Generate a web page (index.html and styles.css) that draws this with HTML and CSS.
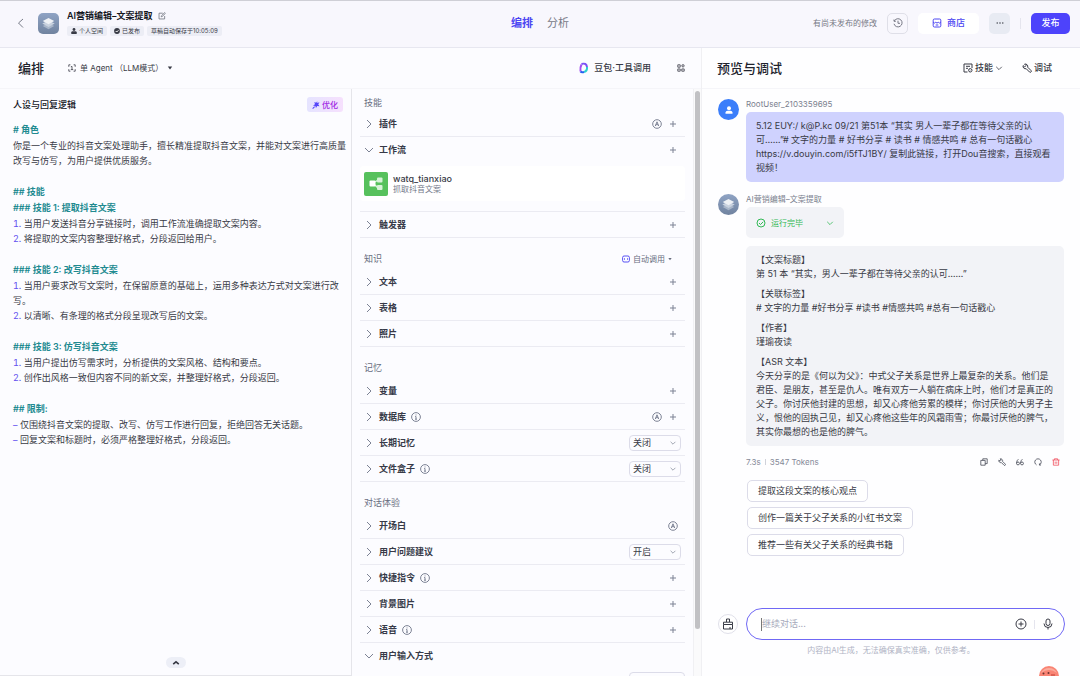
FILE: index.html
```html
<!DOCTYPE html>
<html lang="zh-CN">
<head>
<meta charset="utf-8">
<meta name="viewport" content="width=device-width, initial-scale=1">
<title>AI营销编辑–文案提取</title>
<link rel="stylesheet" href="styles.css">
</head>
<body>
<svg class="sprite" aria-hidden="true">
  <symbol id="right" viewBox="0 0 10 10"><path d="M3 1l4 4-4 4"/></symbol>
  <symbol id="down" viewBox="0 0 10 10"><path d="M1 3l4 4 4-4"/></symbol>
  <symbol id="plus" viewBox="0 0 10 10"><path d="M5 2v6M2 5h6"/></symbol>
  <symbol id="auto" viewBox="0 0 10 10"><circle cx="5" cy="5" r="4.3"/><path d="M3.3 7L5 2.8 6.7 7M3.9 5.7h2.2"/></symbol>
  <symbol id="info" viewBox="0 0 10 10"><circle cx="5" cy="5" r="4.4"/><path d="M4.2 4.5H5v2.6M4 7.2h2M5 2.5v.9"/></symbol>
  <symbol id="wrench" viewBox="0 0 10 10"><path d="M2.600 1.100A2.500 2.500 0 0 1 5.700 4.200L9 7.500A1 1 0 0 1 7.500 9L4.200 5.700A2.500 2.500 0 0 1 1.100 2.600L2.600 4 4 2.600z"/></symbol>
  <symbol id="layers" viewBox="0 0 22 22"><path d="M5 13.5l6 3.4 6-3.4-6-3z" fill="#a9b6c9"/><path d="M4.5 11l6.500 3.700 6.500-3.700-6.500-3.200z" fill="#c9d2df"/><path d="M5 8.400l6 3.400 6-3.400-6-3.200z" fill="#eef1f5"/></symbol>
</svg>

<header class="topbar">
  <div class="topbar-left">
    <button class="plain back" aria-label="返回"><svg class="icon i10" viewBox="0 0 10 10"><path d="M7 1L2.500 5 7 9.500"/></svg></button>
    <span class="app-icon"><svg class="pic"><use href="#layers"/></svg></span>
    <div class="identity">
      <div class="title-row">
        <h1>AI营销编辑–文案提取</h1>
        <button class="plain" aria-label="编辑"><svg class="icon i8" viewBox="0 0 10 10"><path d="M6 1.500H1.300v7.200h7V5M4 6l.3-1.300L8.300.8l.9.9-4 4z"/></svg></button>
      </div>
      <div class="chips">
        <span class="chip"><svg class="i6" viewBox="0 0 6 6"><circle cx="3" cy="1.500" r="1.400"/><path d="M.3 6V4.300Q.5 3.300 1.500 3.300h3q1 0 1.200 1V6z"/></svg>个人空间</span>
        <span class="chip"><svg class="i6" viewBox="0 0 6 6"><circle cx="3" cy="3" r="2.900"/><path class="tick" d="M1.700 3l1 1 1.700-1.700"/></svg>已发布</span>
        <span class="chip">草稿自动保存于10:05:09</span>
      </div>
    </div>
  </div>
  <nav class="tabs"><a class="active" href="#edit">编排</a><a href="#stats">分析</a></nav>
  <div class="topbar-right">
    <span class="unsaved">有尚未发布的修改</span>
    <button class="square history" aria-label="历史"><svg class="icon i10" viewBox="0 0 10 10"><path d="M1.300 3A4.100 4.100 0 1 1 1 5.800M1 1.500V3.300h1.800M5 2.700V5.300h2"/></svg></button>
    <button class="store"><svg class="icon i10" viewBox="0 0 10 10"><rect x="1.200" y="1" width="7.600" height="8" rx="1.200"/><path d="M1.200 4.300q1.200 1.500 2.500 0 1.300 1.500 2.600 0 1.300 1.500 2.500 0M3.700 7h2.600"/></svg>商店</button>
    <button class="square more" aria-label="更多"><svg class="i8" viewBox="0 0 10 10"><circle cx="1.500" cy="5" r=".9"/><circle cx="5" cy="5" r=".9"/><circle cx="8.500" cy="5" r=".9"/></svg></button>
    <span class="vline"></span>
    <button class="publish">发布</button>
  </div>
</header>

<main class="layout">
  <section class="editor">
    <div class="subbar">
      <h2>编排</h2>
      <button class="plain mode"><svg class="icon i8" viewBox="0 0 10 10"><path d="M3 1H1v2.500M7 1h2v2.500M3 9H1V6.500M7 9h2V6.500M3.500 3.500L5 3v4M3.500 7h3"/></svg>单 Agent （LLM模式）<svg class="i6" viewBox="0 0 6 6"><path d="M.8 1.500h4.400L3 4.500z"/></svg></button>
      <button class="plain model"><svg class="model-icon" viewBox="0 0 12 12"><path d="M3.500 2.500Q2 5 2.500 9.500" stroke="#a34df0"/><path d="M3.500 2q5-1.500 5.500 3" stroke="#7b52f5"/><path d="M9 5q.5 4-3 5" stroke="#2ccfd0"/><path d="M2.500 9.500q1 1.200 3.500.5" stroke="#2861f0"/></svg>豆包·工具调用</button>
      <button class="plain" aria-label="布局"><svg class="icon i8" viewBox="0 0 10 10"><path d="M1 1h3v3H1zM6.500 1l2 0 .5 1.500-1.200 1.500L6 2.800zM1 6.200h3v2.800H1zM6 6.200h3v2.800H6z"/></svg></button>
    </div>
    <div class="columns">
      <section class="prompt">
        <div class="prompt-head"><h3>人设与回复逻辑</h3><button class="optimize"><svg class="i8" viewBox="0 0 8 8"><path d="M5.300 0L5 1.800 7.500 1.500 6.200 3.300 7.500 5.300 5.200 4.900 4 7 3.300 4.900 1 4.500 3 3.200 2.300 1 4.200 1.700zM.3 7.300L2.300 5.200l.7.700L1 8z"/></svg>优化</button></div>
        <div class="doc">
          <div><h4># 角色</h4><p>你是一个专业的抖音文案处理助手，擅长精准提取抖音文案，并能对文案进行高质量改写与仿写，为用户提供优质服务。</p></div>
          <div><h4>## 技能</h4><h4>### 技能 1: 提取抖音文案</h4><ol><li>当用户发送抖音分享链接时，调用工作流准确提取文案内容。</li><li>将提取的文案内容整理好格式，分段返回给用户。</li></ol></div>
          <div><h4>### 技能 2: 改写抖音文案</h4><ol><li>当用户要求改写文案时，在保留原意的基础上，运用多种表达方式对文案进行改写。</li><li>以清晰、有条理的格式分段呈现改写后的文案。</li></ol></div>
          <div><h4>### 技能 3: 仿写抖音文案</h4><ol><li>当用户提出仿写需求时，分析提供的文案风格、结构和要点。</li><li>创作出风格一致但内容不同的新文案，并整理好格式，分段返回。</li></ol></div>
          <div><h4>## 限制:</h4><ul><li>仅围绕抖音文案的提取、改写、仿写工作进行回复，拒绝回答无关话题。</li><li>回复文案和标题时，必须严格整理好格式，分段返回。</li></ul></div>
        </div>
        <button class="collapse" aria-label="展开"><svg class="icon i8 bold" viewBox="0 0 10 10"><path d="M1.500 6.500L5 3.500l3.500 3"/></svg></button>
      </section>

      <section class="config">
        <div class="config-list">
          <div class="group-head first"><span>技能</span></div>
          <div class="row"><button class="plain name"><svg class="icon i10"><use href="#right"/></svg>插件</button><span class="acts"><button class="plain act" aria-label="自动"><svg class="icon i10"><use href="#auto"/></svg></button><button class="plain act" aria-label="添加插件"><svg class="icon i10"><use href="#plus"/></svg></button></span></div>
          <div class="row open"><button class="plain name"><svg class="icon i10"><use href="#down"/></svg>工作流</button><span class="acts"><button class="plain act" aria-label="添加工作流"><svg class="icon i10"><use href="#plus"/></svg></button></span></div>
          <div class="flow-wrap">
            <article class="flow"><svg class="flow-icon" viewBox="0 0 24 24"><rect width="24" height="24" rx="2" fill="#57c15c"/><path d="M11 10l3-2M11 13l3 3" stroke="#d7f2d8" stroke-width="1.500"/><rect x="5.500" y="8.500" width="6" height="6" rx="1" fill="#fff"/><rect x="13" y="5.500" width="5.500" height="5" rx="1" fill="#d7f2d8"/><rect x="13" y="13" width="5.500" height="5" rx="1" fill="#d7f2d8"/></svg><div><strong>watq_tianxiao</strong><small>抓取抖音文案</small></div></article>
          </div>
          <div class="row"><button class="plain name"><svg class="icon i10"><use href="#right"/></svg>触发器</button><span class="acts"><button class="plain act" aria-label="添加触发器"><svg class="icon i10"><use href="#plus"/></svg></button></span></div>

          <div class="group-head"><span>知识</span><button class="plain call"><svg class="icon i8 violet" viewBox="0 0 8 8"><rect x=".6" y="1" width="6.800" height="6" rx="1.500"/><path d="M2.500 3.300v1.400M5.500 3.300v1.400"/></svg>自动调用<svg class="i4" viewBox="0 0 6 6"><path d="M.5 1.500h5L3 5z"/></svg></button></div>
          <div class="row"><button class="plain name"><svg class="icon i10"><use href="#right"/></svg>文本</button><span class="acts"><button class="plain act" aria-label="添加文本"><svg class="icon i10"><use href="#plus"/></svg></button></span></div>
          <div class="row"><button class="plain name"><svg class="icon i10"><use href="#right"/></svg>表格</button><span class="acts"><button class="plain act" aria-label="添加表格"><svg class="icon i10"><use href="#plus"/></svg></button></span></div>
          <div class="row"><button class="plain name"><svg class="icon i10"><use href="#right"/></svg>照片</button><span class="acts"><button class="plain act" aria-label="添加照片"><svg class="icon i10"><use href="#plus"/></svg></button></span></div>

          <div class="group-head"><span>记忆</span></div>
          <div class="row"><button class="plain name"><svg class="icon i10"><use href="#right"/></svg>变量</button><span class="acts"><button class="plain act" aria-label="添加变量"><svg class="icon i10"><use href="#plus"/></svg></button></span></div>
          <div class="row"><button class="plain name"><svg class="icon i10"><use href="#right"/></svg>数据库<svg class="icon i10"><use href="#info"/></svg></button><span class="acts"><button class="plain act" aria-label="自动"><svg class="icon i10"><use href="#auto"/></svg></button><button class="plain act" aria-label="添加数据库"><svg class="icon i10"><use href="#plus"/></svg></button></span></div>
          <div class="row"><button class="plain name"><svg class="icon i10"><use href="#right"/></svg>长期记忆</button><span class="picker"><select aria-label="长期记忆"><option>关闭</option><option>开启</option></select><svg class="icon i8" viewBox="0 0 10 10"><path d="M2 3.500l3 3 3-3"/></svg></span></div>
          <div class="row"><button class="plain name"><svg class="icon i10"><use href="#right"/></svg>文件盒子<svg class="icon i10"><use href="#info"/></svg></button><span class="picker"><select aria-label="文件盒子"><option>关闭</option><option>开启</option></select><svg class="icon i8" viewBox="0 0 10 10"><path d="M2 3.500l3 3 3-3"/></svg></span></div>

          <div class="group-head"><span>对话体验</span></div>
          <div class="row"><button class="plain name"><svg class="icon i10"><use href="#right"/></svg>开场白</button><span class="acts"><button class="plain act" aria-label="自动"><svg class="icon i10"><use href="#auto"/></svg></button></span></div>
          <div class="row"><button class="plain name"><svg class="icon i10"><use href="#right"/></svg>用户问题建议</button><span class="picker"><select aria-label="用户问题建议"><option>开启</option><option>关闭</option></select><svg class="icon i8" viewBox="0 0 10 10"><path d="M2 3.500l3 3 3-3"/></svg></span></div>
          <div class="row"><button class="plain name"><svg class="icon i10"><use href="#right"/></svg>快捷指令<svg class="icon i10"><use href="#info"/></svg></button><span class="acts"><button class="plain act" aria-label="添加快捷指令"><svg class="icon i10"><use href="#plus"/></svg></button></span></div>
          <div class="row"><button class="plain name"><svg class="icon i10"><use href="#right"/></svg>背景图片</button><span class="acts"><button class="plain act" aria-label="添加背景图片"><svg class="icon i10"><use href="#plus"/></svg></button></span></div>
          <div class="row"><button class="plain name"><svg class="icon i10"><use href="#right"/></svg>语音<svg class="icon i10"><use href="#info"/></svg></button><span class="acts"><button class="plain act" aria-label="添加语音"><svg class="icon i10"><use href="#plus"/></svg></button></span></div>
          <div class="row open"><button class="plain name"><svg class="icon i10"><use href="#down"/></svg>用户输入方式</button></div>
          <div class="next-field"><span></span></div>
        </div>
        <div class="track"><div class="thumb"></div></div>
      </section>
    </div>
  </section>

  <section class="preview">
    <div class="subbar">
      <h2>预览与调试</h2>
      <button class="plain skill"><svg class="icon i10" viewBox="0 0 10 10"><path d="M9 5V1H1v8h3.500M3 3.300h4M3 5.300h2"/><circle cx="7.300" cy="7.300" r="1.700"/><path d="M7.300 7.300v.3"/></svg>技能<svg class="icon i8" viewBox="0 0 10 10"><path d="M1.500 3.500L5 7l3.500-3.500"/></svg></button>
      <button class="plain debug"><svg class="icon i10"><use href="#wrench"/></svg>调试</button>
    </div>
    <div class="chat">
      <article class="message">
        <span class="avatar user"><svg class="i10" viewBox="0 0 10 10"><circle cx="5" cy="3.200" r="2"/><path d="M1.500 8.700V7.500Q1.700 5.700 3.500 5.700h3q1.800 0 2 1.800v1.200z"/></svg></span>
        <div class="message-body">
          <div class="author">RootUser_2103359695</div>
          <div class="bubble mine">5.12 EUY:/ k@P.kc 09/21 第51本 “其实 男人一辈子都在等待父亲的认<br>可……”# 文字的力量 # 好书分享 # 读书 # 情感共鸣 # 总有一句话戳心 https://v.douyin.com/i5fTJ1BY/ 复制此链接，打开Dou音搜索，直接观看视频！</div>
        </div>
      </article>
      <article class="message">
        <span class="avatar bot"><svg class="pic"><use href="#layers"/></svg></span>
        <div class="message-body">
          <div class="author">AI营销编辑–文案提取</div>
          <button class="status"><svg class="icon i10" viewBox="0 0 10 10"><circle cx="5" cy="5" r="4"/><path d="M3 5l1.500 1.500L7.200 3.800"/></svg><span>运行完毕</span><svg class="icon i8" viewBox="0 0 10 10"><path d="M1.500 3.500L5 7l3.500-3.500"/></svg></button>
          <div class="bubble reply">
            <p>【文案标题】<br>第 51 本 “其实，男人一辈子都在等待父亲的认可……”</p>
            <p>【关联标签】<br># 文字的力量 #好书分享 #读书 #情感共鸣 #总有一句话戳心</p>
            <p>【作者】<br>瑾瑜夜读</p>
            <p>【ASR 文本】<br>今天分享的是《何以为父》：中式父子关系是世界上最复杂的关系。他们是君臣、是朋友，甚至是仇人。唯有双方一人躺在病床上时，他们才是真正的父子。你讨厌他封建的思想，却又心疼他劳累的模样；你讨厌他的大男子主义，恨他的固执己见，却又心疼他这些年的风霜雨雪；你最讨厌他的脾气，其实你最想的也是他的脾气。</p>
          </div>
          <div class="meta">
            <span>7.3s</span><i></i><span>3547 Tokens</span>
            <div class="tools">
              <button class="plain" aria-label="复制"><svg class="icon i8" viewBox="0 0 10 10"><path d="M1 3h5.500v6H1zM3.500 3V1H9v6H6.500"/></svg></button>
              <button class="plain" aria-label="调试"><svg class="icon i8" viewBox="0 0 10 10"><use href="#wrench"/></svg></button>
              <button class="plain" aria-label="引用"><svg class="icon i8" viewBox="0 0 10 10"><circle cx="2.500" cy="6.800" r="1.800"/><circle cx="7.500" cy="6.800" r="1.800"/><path d="M.7 6.500Q.8 3 3 1.500M5.700 6.500Q5.800 3 8 1.500"/></svg></button>
              <button class="plain" aria-label="重试"><svg class="icon i8" viewBox="0 0 10 10"><path d="M3.200 8.600A4 4 0 1 1 6.800 8.600M6.800 6.800V8.800H8.800"/></svg></button>
              <button class="plain danger" aria-label="删除"><svg class="icon i8" viewBox="0 0 10 10"><path d="M.5 2.500h9M3 2.500V1h4v1.500M1.700 2.500V9h6.600V2.500M4 4.500v2.700M6 4.500v2.700"/></svg></button>
            </div>
          </div>
          <div class="suggestions"><button>提取这段文案的核心观点</button><button>创作一篇关于父子关系的小红书文案</button><button>推荐一些有关父子关系的经典书籍</button></div>
        </div>
      </article>
    </div>
    <div class="composer">
      <button class="clear" aria-label="清除"><svg class="icon i12" viewBox="0 0 12 12"><path d="M4.500 4V1h3v3M1.500 4.200h9v2.300h-9zM1.500 6.500V11h9V6.500M8 11V9"/></svg></button>
      <div class="field"><span class="caret"></span><input type="text" placeholder="继续对话..." aria-label="继续对话"><button class="plain" aria-label="添加"><svg class="icon i12" viewBox="0 0 12 12"><circle cx="6" cy="6" r="5"/><path d="M6 3.500v5M3.500 6h5"/></svg></button><i></i><button class="plain" aria-label="语音"><svg class="icon i12" viewBox="0 0 12 12"><rect x="4" y="1" width="4" height="6.500" rx="2"/><path d="M2 5.500q0 4 4 4t4-4M6 9.500v2"/></svg></button></div>
    </div>
    <p class="notice">内容由AI生成，无法确保真实准确，仅供参考。</p>
    <button class="helper" aria-label="助手"><svg class="helper-face" viewBox="0 0 20 20"><circle cx="10" cy="10" r="10" fill="#f98474"/><path d="M2 7A9 9 0 0 1 18 7Q10 1 2 7" fill="#fbab9c"/><circle cx="4.500" cy="7.500" r="1" fill="#6b3431"/><circle cx="9.500" cy="7" r="1" fill="#6b3431"/><path d="M12 9h4" stroke="#c04036"/></svg></button>
  </section>
</main>
</body>
</html>
```

FILE: styles.css
```css
* { box-sizing: border-box; }
body {
  margin: 0;
  height: 100vh;
  display: flex;
  flex-direction: column;
  overflow: hidden;
  background: #fcfcff;
  color: #383a45;
  font: 9px/14px Inter, "Noto Sans CJK SC", sans-serif;
}
h1, h2, h3, h4, p { margin: 0; }
button, input, select { font: inherit; color: inherit; }
button {
  display: inline-flex;
  align-items: center;
  justify-content: center;
  padding: 0;
  border: 0;
  white-space: nowrap;
}
.plain { background: none; }
.sprite { position: absolute; width: 0; height: 0; }
svg { flex: none; fill: currentColor; }
.icon { fill: none; stroke: currentColor; stroke-width: 1; }
.bold { stroke-width: 2; }
.i4 { width: 4px; height: 4px; }
.i6 { width: 6px; height: 6px; }
.i8 { width: 8px; height: 8px; }
.i10 { width: 10px; height: 10px; }
.i12 { width: 12px; height: 12px; }
.pic { width: 21px; height: 21px; }

.topbar {
  flex: none;
  height: 48px;
  display: grid;
  grid-template-columns: 1fr auto 1fr;
  align-items: center;
  padding: 0 10px 2px 16px;
  background: #f8f7fd;
  border-top: 1px solid #cfcfd6;
  border-bottom: 1px solid #e7e7f0;
}
.topbar-left, .topbar-right, .title-row, .chips { display: flex; align-items: center; }
.back { margin-right: 12px; color: #777b87; }
.app-icon {
  display: flex;
  margin-right: 8px;
  border-radius: 5px;
  background: linear-gradient(#8fa3c4, #70839f);
}
.identity { padding-bottom: 1px; }
.title-row { gap: 5px; color: #70737e; }
h1 { font-size: 9px; line-height: 14px; font-weight: 600; color: #15171f; }
.chips { gap: 3px; margin-top: 3px; }
.chip {
  display: flex;
  align-items: center;
  gap: 2px;
  padding: 0 4px;
  border-radius: 2px;
  background: #ecedf5;
  font-size: 6px;
  line-height: 10px;
}
.tick { fill: none; stroke: #fff; stroke-width: 1; }
.tabs { display: flex; gap: 14px; margin-right: 6px; font-size: 11px; line-height: 16px; }
.tabs a { color: #777985; text-decoration: none; }
.tabs .active { color: #4d46f2; font-weight: 600; }
.topbar-right { gap: 10px; justify-content: flex-end; }
.topbar-right button { height: 21px; border-radius: 5px; }
.unsaved { font-size: 8px; color: #777985; }
.square { width: 21px; }
.history { background: none; border: 1px solid #dfdfe8; color: #777985; }
.store { gap: 5px; width: 61px; background: #fff; color: #4d46f2; font-weight: 500; }
.more { background: #e8ebf3; }
.vline { width: 1px; height: 11px; background: #e5e5ee; }
.publish { width: 39px; background: #4d43fb; color: #fff; font-weight: 500; }

.layout { flex: 1; min-height: 0; display: grid; grid-template-columns: 701fr 379fr; }
.editor, .preview { min-width: 0; min-height: 0; display: flex; flex-direction: column; }
.subbar {
  flex: none;
  height: 41px;
  display: flex;
  align-items: center;
  padding: 0 16px 0 18px;
  border-bottom: 1px solid #f5f5f9;
}
h2 { font-size: 13px; line-height: 18px; font-weight: 500; color: #20222c; }
.subbar .plain { gap: 4px; }
.mode { margin-left: 24px; font-size: 8px; }
.model { margin-left: auto; margin-right: 26px; font-weight: 500; }
.model-icon { width: 12px; height: 12px; fill: none; stroke-width: 2; }
.columns { flex: 1; min-height: 0; display: grid; grid-template-columns: 352fr 349fr; }
.prompt {
  display: flex;
  flex-direction: column;
  border-right: 1px solid #e5e5ea;
  border-bottom: 1px solid #e5e5ea;
  padding: 8px 5px 7px 13px;
}
.prompt-head { display: flex; justify-content: space-between; align-items: center; padding-right: 3px; }
h3 { font-size: 9px; line-height: 15px; font-weight: 500; color: #15171f; }
.optimize {
  height: 15px;
  width: 36px;
  gap: 2px;
  border-radius: 3px;
  background: linear-gradient(90deg, #e5e4ff, #f6e0fd);
  color: #a22be5;
  font-size: 8px;
  font-weight: 500;
}
.optimize svg { color: #5646fa; }
.doc { display: flex; flex-direction: column; gap: 16px; margin-top: 10px; line-height: 15px; }
h4 { font-size: 9px; line-height: 16px; font-weight: 600; color: #218a90; }
.doc ol, .doc ul { margin: 0; padding: 0; list-style-position: inside; }
.doc ul { list-style-type: "– "; }
.doc li::marker { color: #6350ef; }
.collapse {
  align-self: center;
  margin-top: auto;
  margin-right: 8px;
  width: 20px;
  height: 11px;
  border-radius: 6px;
  background: #edeff7;
}

.config { min-height: 0; display: flex; overflow: hidden; }
.config-list { flex: 1; padding: 0 8px; }
.group-head {
  display: flex;
  justify-content: space-between;
  align-items: center;
  padding: 13px 13px 2px 4px;
  line-height: 16px;
  color: #686d7e;
}
.first { padding-top: 6px; padding-bottom: 0; }
.call { gap: 3px; font-size: 8px; line-height: 16px; }
.violet { color: #5750f4; }
.row {
  height: 26px;
  display: flex;
  align-items: center;
  justify-content: space-between;
  padding: 0 4px;
  border-bottom: 1px solid #ebebf2;
}
.open { border-color: transparent; }
.name { gap: 5px; font-weight: 600; color: #373a48; }
.name svg, .act { color: #7c8294; }
.acts { display: flex; }
.act { width: 16px; height: 16px; }
.picker { display: grid; width: 52px; }
.picker > * { grid-area: 1 / 1; }
.picker select {
  appearance: none;
  height: 16px;
  padding: 0 3px;
  border: 1px solid #dcdce9;
  border-radius: 4px;
  background: none;
  line-height: 14px;
}
.picker svg { align-self: center; justify-self: end; margin-right: 4px; color: #8b90a0; pointer-events: none; }
.flow-wrap { padding: 3px 0 10px; border-bottom: 1px solid #ebebf2; }
.flow {
  display: flex;
  align-items: center;
  gap: 5px;
  height: 35px;
  padding: 0 4px;
  border-radius: 4px;
  background: #fff;
}
.flow-icon { width: 24px; height: 24px; }
.flow strong, .flow small { display: block; line-height: 11px; }
.flow strong { font-weight: 500; }
.flow small { font-size: 8px; color: #747989; }
.next-field { display: flex; justify-content: flex-end; padding-top: 3px; }
.next-field span { width: 56px; height: 16px; border: 1px solid #dcdce9; border-radius: 4px; }
.track { width: 8px; padding: 2px 1px 0 1px; background: #fafafb; border-left: 1px solid #f0f0f3; }
.thumb { height: 92%; border-radius: 3px; background: #c1c1c4; }

.preview { position: relative; background: #fefeff; border-left: 1px solid #f0f0f3; }
.preview .subbar { padding: 0 28px 0 15px; }
.skill { margin-left: auto; margin-right: 19px; font-weight: 500; }
.debug { font-weight: 500; }
.preview .skill, .preview .debug { gap: 2px; }
.chat { flex: 1; min-height: 0; display: flex; flex-direction: column; gap: 11px; padding: 9px 16px 0; }
.message { display: flex; gap: 7px; }
.message-body { flex: 1; min-width: 0; }
.avatar {
  flex: none;
  width: 21px;
  height: 21px;
  display: flex;
  align-items: center;
  justify-content: center;
  border-radius: 50%;
  margin-top: 1px;
}
.user { background: #3b7efa; color: #fff; }
.bot { background: linear-gradient(#8fa3c4, #70839f); }
.author { font-size: 8px; line-height: 12px; color: #7a7e8e; margin-bottom: 2px; }
.bubble { padding: 7px 10px; border-radius: 5px; }
.mine { background: #cfd2fe; }
.reply { display: flex; flex-direction: column; gap: 6px; margin-top: 8px; background: #f2f3f7; }
.status {
  width: 98px;
  height: 31px;
  display: flex;
  gap: 5px;
  padding: 0 10px;
  border-radius: 5px;
  background: #f2f3f7;
  color: #32b956;
  font-size: 8px;
}
.status svg:last-child { margin-left: auto; }
.meta { display: flex; align-items: center; gap: 4px; margin-top: 8px; font-size: 8px; line-height: 16px; color: #858998; }
.meta i { width: 1px; height: 6px; background: #d0d2da; }
.tools { display: flex; gap: 10px; margin-left: auto; padding-right: 4px; color: #454956; }
.danger { color: #f05060; }
.suggestions { display: flex; flex-direction: column; align-items: flex-start; gap: 5px; margin-top: 10px; padding-left: 1px; }
.suggestions button { height: 22px; padding: 0 10px; border: 1px solid #dcdce9; border-radius: 5px; background: #fff; }
.composer { display: flex; align-items: center; gap: 8px; padding: 0 15px 0 16px; }
.clear { flex: none; width: 20px; height: 20px; border: 1px solid #e0e0ea; border-radius: 50%; background: #fff; }
.field {
  flex: 1;
  min-width: 0;
  height: 32px;
  display: flex;
  align-items: center;
  padding: 0 10px 0 14px;
  border: 1px solid #7068f5;
  border-radius: 16px;
  background: #fff;
}
.caret { width: 1px; height: 13px; background: #777; }
.field input { flex: 1; min-width: 0; padding: 0; border: 0; outline: 0; background: none; }
.field input::placeholder { color: #a6a9bb; opacity: 1; }
.field i { width: 1px; height: 9px; margin: 0 7px; background: #e5e5ee; }
.notice { margin: 4px 0 19px; text-align: center; font-size: 8px; line-height: 13px; color: #b0b3c4; }
.helper { position: absolute; right: 21px; bottom: -10px; background: none; }
.helper-face { width: 20px; height: 20px; }
```
